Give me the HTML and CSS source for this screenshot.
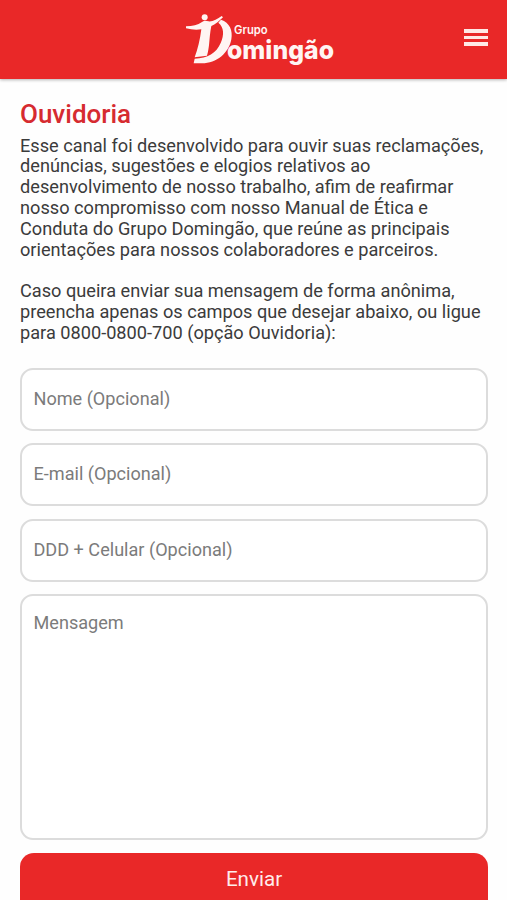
FILE: index.html
```html
<!DOCTYPE html>
<html lang="pt-BR">
<head>
<meta charset="utf-8">
<meta name="viewport" content="width=device-width, initial-scale=1">
<title>Ouvidoria</title>
<link rel="stylesheet" href="styles.css">
</head>
<body>
<header class="topbar">
  <svg class="logo" viewBox="0 0 510 228" role="img" aria-label="Grupo Domingão">
    <circle cx="83" cy="40" r="9"/>
    <path d="M27 67C47 66 62 63 75 54C82 49 88 50 94 52C106 54 121 45 134 36L138 40C126 52 115 61 103 66C99 84 98 105 96 124C94 140 92 149 90 155L53 160C62 136 69 108 73 76C58 78 43 77 27 73Z"/>
    <path d="M132 47C158 56 168 79 163 106C156 147 119 178 75 178L50 178L53 164C92 162 118 148 131 117C142 91 141 70 124 56Z"/>
    <text class="logo-small" x="171" y="91" textLength="101" lengthAdjust="spacingAndGlyphs">Grupo</text>
    <text class="logo-large" x="150" y="165" textLength="321" lengthAdjust="spacingAndGlyphs">omingão</text>
  </svg>
  <button class="menu" type="button" aria-label="Menu"><span></span><span></span><span></span></button>
</header>
<main class="content">
  <h1>Ouvidoria</h1>
  <p>Esse canal foi desenvolvido para ouvir suas reclamações,<br>denúncias, sugestões e elogios relativos ao<br>desenvolvimento de nosso trabalho, afim de reafirmar<br>nosso compromisso com nosso Manual de Ética e<br>Conduta do Grupo Domingão, que reúne as principais<br>orientações para nossos colaboradores e parceiros.</p>
  <p>Caso queira enviar sua mensagem de forma anônima,<br>preencha apenas os campos que desejar abaixo, ou ligue<br>para 0800-0800-700 (opção Ouvidoria):</p>
  <form class="form">
    <input class="field" type="text" placeholder="Nome (Opcional)">
    <input class="field" type="email" placeholder="E-mail (Opcional)">
    <input class="field" type="tel" placeholder="DDD + Celular (Opcional)">
    <textarea class="field message" placeholder="Mensagem"></textarea>
    <button class="submit" type="button">Enviar</button>
  </form>
</main>
</body>
</html>
```
FILE: styles.css
```css
* {
  box-sizing: border-box;
}

html,
body {
  height: 900px;
  overflow: hidden;
}

body {
  margin: 0;
  background: #fefefe;
  color: #3b3b3b;
  font-family: Roboto, sans-serif;
}

.topbar {
  display: flex;
  justify-content: space-between;
  height: 79px;
  padding: 4px 19px 0 177px;
  background: #e92828;
  box-shadow: 0 1px 3px rgba(0, 0, 0, 0.3);
}

.logo {
  width: 170px;
  height: 76px;
  flex: none;
  margin-bottom: -1px;
  overflow: visible;
  fill: #fff5f3;
}

.logo-small {
  font: 600 35px Inter, sans-serif;
}

.logo-large {
  font: 800 78px Inter, sans-serif;
}

.menu {
  display: flex;
  flex-direction: column;
  gap: 3px;
  width: 24px;
  height: 17px;
  margin-top: 25px;
  padding: 0;
  border: 0;
  background: none;
}

.menu span {
  height: 3.5px;
  background: #ffe9e6;
}

.content {
  padding: 20px 19px 0 20px;
}

h1 {
  margin: 0 0 5.6px;
  color: #d62b30;
  font-size: 26px;
  font-weight: 500;
  line-height: 31px;
}

p {
  margin: 0 0 20.8px;
  font-size: 18.18px;
  line-height: 20.8px;
  white-space: nowrap;
}

.form {
  display: flex;
  flex-direction: column;
  gap: 12.4px;
  margin-top: 24.4px;
}

.field {
  display: block;
  width: 100%;
  height: 63px;
  padding: 0 11.5px 2.4px;
  border: 2px solid #dcdcdc;
  border-radius: 13px;
  outline: 0;
  background: #fff;
  font: 18.1px/21px Roboto, sans-serif;
  resize: none;
}

.field::placeholder {
  color: #7b7b7b;
  opacity: 1;
}

.message {
  height: 246px;
  padding-top: 16px;
}

.submit {
  height: 62px;
  padding: 0 0 9px;
  border: 0;
  border-radius: 14px;
  background: #e92828;
  color: #ffeceb;
  font: 20.6px/24px Roboto, sans-serif;
}
```
